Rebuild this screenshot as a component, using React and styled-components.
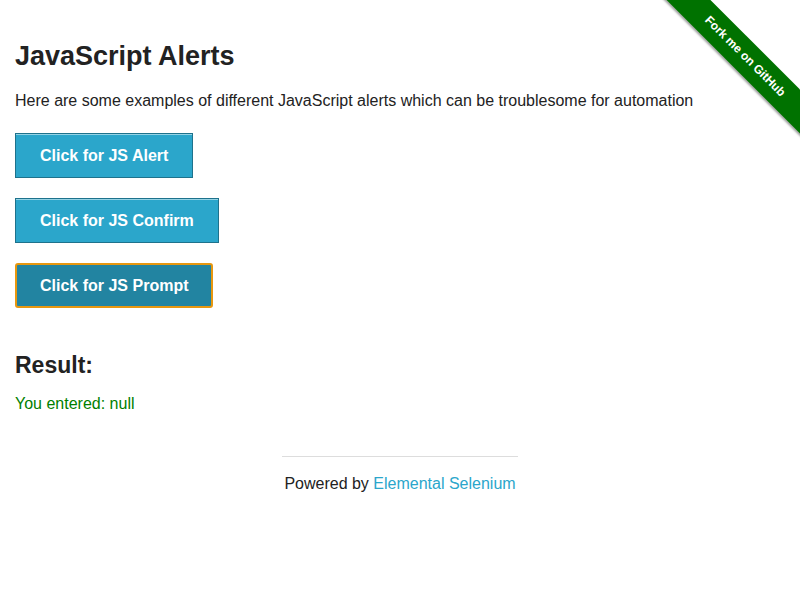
import React from "react";
import styled, { createGlobalStyle } from "styled-components";

const GlobalStyle = createGlobalStyle`
  html, body {
    margin: 0;
    padding: 0;
    background: #fff;
  }
  body {
    font-family: "Liberation Sans", Arial, Helvetica, sans-serif;
    color: #222;
    font-size: 16px;
  }
`;

const buttons = [
  { label: "Click for JS Alert" },
  { label: "Click for JS Confirm" },
  { label: "Click for JS Prompt", focused: true },
];

const App = () => {
  return (
    <Page>
      <GlobalStyle />
      <Ribbon>
        <RibbonBand>Fork me on GitHub</RibbonBand>
      </Ribbon>

      <Content>
        <Title>JavaScript Alerts</Title>
        <Intro>
          Here are some examples of different JavaScript alerts which can be
          troublesome for automation
        </Intro>

        <ButtonList>
          {buttons.map((b) => (
            <li key={b.label}>
              <AlertButton $focused={b.focused}>{b.label}</AlertButton>
            </li>
          ))}
        </ButtonList>

        <ResultTitle>Result:</ResultTitle>
        <ResultText>You entered: null</ResultText>
      </Content>

      <Footer>
        <FooterColumn>
          <Rule />
          <FooterText>
            Powered by <FooterLink href="#">Elemental Selenium</FooterLink>
          </FooterText>
        </FooterColumn>
      </Footer>
    </Page>
  );
};

const Page = styled.div`
  position: relative;
  width: 100%;
  min-height: 600px;
  overflow: hidden;
`;

const Ribbon = styled.div`
  position: absolute;
  top: 0;
  right: 0;
  width: 150px;
  height: 150px;
  overflow: hidden;
`;

const RibbonBand = styled.div`
  position: absolute;
  left: -15px;
  top: 41px;
  width: 220px;
  height: 31px;
  background: #007200;
  color: #fff;
  font-family: "Liberation Sans", Arial, sans-serif;
  font-weight: bold;
  font-size: 12px;
  line-height: 31px;
  text-align: center;
  transform: rotate(45deg);
  box-shadow: 0 2px 2px rgba(0, 0, 0, 0.35);
`;

const Content = styled.div`
  padding: 40px 15px 0;
`;

const Title = styled.h3`
  margin: 0 0 18px;
  font-size: 27px;
  line-height: 1.2;
  font-weight: bold;
  color: #222;
`;

const Intro = styled.p`
  margin: 0 0 20px;
  font-size: 16px;
  line-height: 1.4;
`;

const ButtonList = styled.ul`
  list-style: none;
  margin: 0;
  padding: 0;
  display: flex;
  flex-direction: column;
  align-items: flex-start;
  gap: 20px;
`;

const AlertButton = styled.button`
  font-family: "Liberation Sans", Arial, sans-serif;
  font-weight: bold;
  font-size: 16px;
  line-height: 19px;
  color: #fff;
  cursor: pointer;
  padding: ${(p) => (p.$focused ? "11px 23px" : "12px 24px")};
  background: ${(p) => (p.$focused ? "#2284a1" : "#2ba6cb")};
  border: ${(p) => (p.$focused ? "2px solid #e7970f" : "1px solid #1e728c")};
  border-radius: ${(p) => (p.$focused ? "3px" : "0")};
  box-shadow: ${(p) =>
    p.$focused ? "none" : "inset 0 1px 0 rgba(255, 255, 255, 0.5)"};
`;

const ResultTitle = styled.h4`
  margin: 44px 0 14px;
  font-size: 23px;
  line-height: 1.2;
  font-weight: bold;
  color: #222;
`;

const ResultText = styled.p`
  margin: 0;
  font-size: 16px;
  line-height: 1.4;
  color: green;
`;

const Footer = styled.div`
  display: flex;
  justify-content: center;
  margin-top: 40px;
`;

const FooterColumn = styled.div`
  width: 33.3333%;
  padding: 0 15px;
  box-sizing: border-box;
  text-align: center;
`;

const Rule = styled.hr`
  margin: 0 0 16px;
  border: 0;
  border-top: 1px solid #ddd;
  height: 0;
`;

const FooterText = styled.div`
  font-size: 16px;
  line-height: 22px;
  color: #222;
`;

const FooterLink = styled.a`
  color: #2ba6cb;
  text-decoration: none;
`;

export default App;
